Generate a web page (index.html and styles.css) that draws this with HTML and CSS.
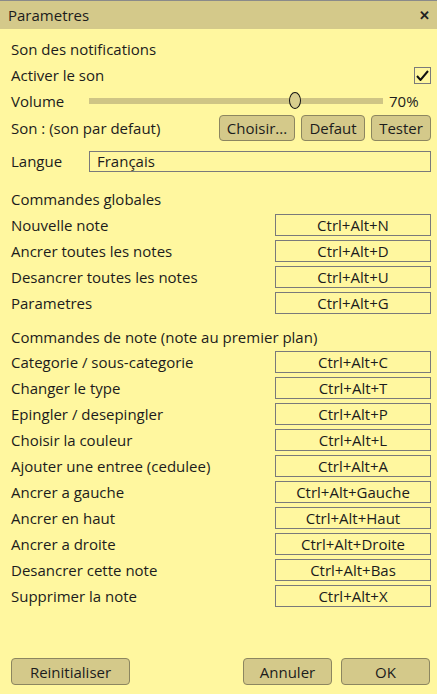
FILE: index.html
```html
<!DOCTYPE html>
<html lang="fr">
<head>
  <meta charset="UTF-8" />
  <meta name="viewport" content="width=device-width, initial-scale=1.0" />
  <title>Parametres</title>
  <link rel="stylesheet" href="styles.css">
</head>
<body>
  <div class="window">
    <div class="titlebar">
      <span>Parametres</span>
      <span class="close">&#x2715;</span>
    </div>

    <div class="content">
      <div class="section">Son des notifications</div>
      <div class="row">
        <span>Activer le son</span>
        <span class="check">
          <svg width="13" height="11" viewBox="0 0 13 11"><path d="M1 6 L4.5 10 L12 1" fill="none" stroke="#111" stroke-width="2"/></svg>
        </span>
      </div>
      <div class="row">
        <span class="label">Volume</span>
        <div class="slider">
          <div class="track"></div>
          <div class="thumb" style="left: 70%"></div>
        </div>
        <span class="pct">70%</span>
      </div>
      <div class="row row-tall">
        <span>Son : (son par defaut)</span>
        <div class="btns">
          <button class="btn btn-choose">Choisir...</button>
          <button class="btn btn-default">Defaut</button>
          <button class="btn btn-test">Tester</button>
        </div>
      </div>
      <div class="row row-lang">
        <span class="label">Langue</span>
        <div class="field">Français</div>
      </div>

      <div class="section section-gap">Commandes globales</div>
      <div class="row"><span>Nouvelle note</span><span class="key">Ctrl+Alt+N</span></div>
      <div class="row"><span>Ancrer toutes les notes</span><span class="key">Ctrl+Alt+D</span></div>
      <div class="row"><span>Desancrer toutes les notes</span><span class="key">Ctrl+Alt+U</span></div>
      <div class="row"><span>Parametres</span><span class="key">Ctrl+Alt+G</span></div>

      <div class="section section-note">Commandes de note (note au premier plan)</div>
      <div class="row"><span>Categorie / sous-categorie</span><span class="key">Ctrl+Alt+C</span></div>
      <div class="row"><span>Changer le type</span><span class="key">Ctrl+Alt+T</span></div>
      <div class="row"><span>Epingler / desepingler</span><span class="key">Ctrl+Alt+P</span></div>
      <div class="row"><span>Choisir la couleur</span><span class="key">Ctrl+Alt+L</span></div>
      <div class="row"><span>Ajouter une entree (cedulee)</span><span class="key">Ctrl+Alt+A</span></div>
      <div class="row"><span>Ancrer a gauche</span><span class="key">Ctrl+Alt+Gauche</span></div>
      <div class="row"><span>Ancrer en haut</span><span class="key">Ctrl+Alt+Haut</span></div>
      <div class="row"><span>Ancrer a droite</span><span class="key">Ctrl+Alt+Droite</span></div>
      <div class="row"><span>Desancrer cette note</span><span class="key">Ctrl+Alt+Bas</span></div>
      <div class="row"><span>Supprimer la note</span><span class="key">Ctrl+Alt+X</span></div>
    </div>

    <div class="footer">
      <button class="btn btn-reset">Reinitialiser</button>
      <div class="footer-right">
        <button class="btn btn-cancel">Annuler</button>
        <button class="btn btn-ok">OK</button>
      </div>
    </div>
  </div>
</body>
</html>
```

FILE: styles.css
```css
html, body {
  margin: 0;
  height: 100%;
}
body {
  font-family: "Open Sans", "Noto Sans", sans-serif;
  font-size: 15px;
  color: #1c1c1c;
  background: #fff79f;
}
.window {
  height: 100%;
  box-sizing: border-box;
  border-top: 1px solid #8a8a8a;
  display: flex;
  flex-direction: column;
}
.titlebar {
  height: 28px;
  background: #d4c98a;
  display: flex;
  align-items: center;
  justify-content: space-between;
  padding: 0 7px 0 8px;
}
.close {
  font-size: 13px;
  font-weight: bold;
  color: #222;
}
.content {
  padding: 7px 6px 0 11px;
}
.section {
  height: 26px;
  line-height: 26px;
}
.section-gap {
  margin-top: 12px;
}
.section-note {
  margin-top: 7px;
  padding-top: 3px;
  height: 23px;
  line-height: 23px;
}
.row {
  height: 26px;
  display: flex;
  align-items: center;
  justify-content: space-between;
}
.row-tall {
  height: 28px;
}
.row-lang {
  margin-top: 6px;
  justify-content: flex-start;
}
.label {
  width: 78px;
  flex-shrink: 0;
}
.check {
  width: 15px;
  height: 15px;
  border: 1px solid #7a7a7a;
  display: flex;
  align-items: center;
  justify-content: center;
}
.slider {
  position: relative;
  flex: 1;
  height: 18px;
  display: flex;
  align-items: center;
}
.track {
  width: 100%;
  height: 6px;
  background: #cfc585;
}
.thumb {
  position: absolute;
  top: 0;
  width: 10px;
  height: 15px;
  margin-left: -6px;
  border: 1px solid #111;
  border-radius: 50%;
  background: #d8ce8e;
}
.pct {
  width: 48px;
  padding-left: 6px;
  box-sizing: border-box;
}
.btns {
  display: flex;
  gap: 6px;
}
.btn {
  font-family: inherit;
  font-size: 15px;
  color: #1c1c1c;
  background: #d4c98a;
  border: 1px solid #8c8660;
  border-radius: 4px;
  padding: 0;
  height: 26px;
}
.btn-choose { width: 76px; }
.btn-default { width: 64px; }
.btn-test { width: 60px; }
.field {
  flex: 1;
  height: 19px;
  line-height: 19px;
  border: 1px solid #7a7a7a;
  padding-left: 7px;
}
.key {
  width: 154px;
  height: 20px;
  line-height: 20px;
  border: 1px solid #7a7a7a;
  text-align: center;
}
.footer {
  margin-top: auto;
  display: flex;
  justify-content: space-between;
  padding: 0 7px 9px 11px;
}
.footer .btn {
  height: 27px;
}
.footer-right {
  display: flex;
  gap: 9px;
}
.btn-reset { width: 119px; }
.btn-cancel { width: 89px; }
.btn-ok { width: 89px; }
```
